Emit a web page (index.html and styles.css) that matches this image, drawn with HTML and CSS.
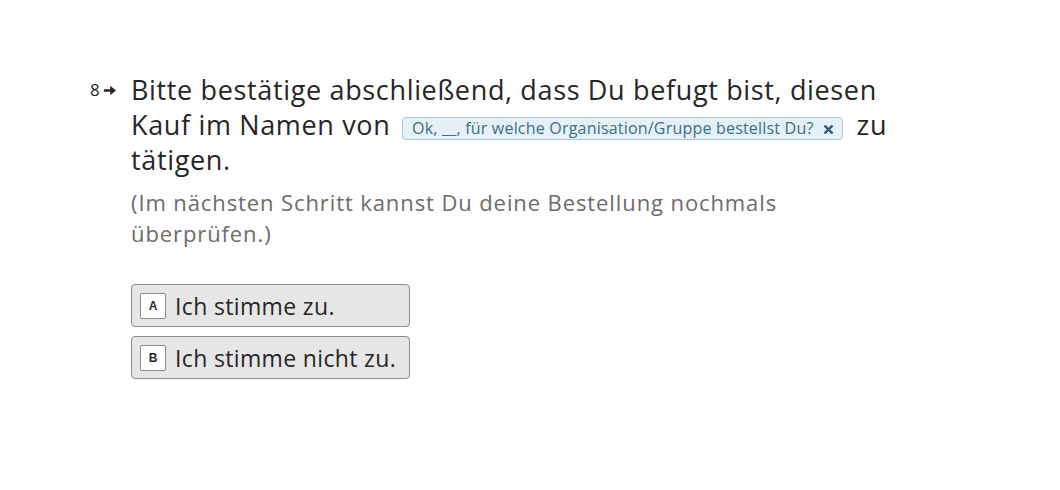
FILE: index.html
```html
<!DOCTYPE html>
<html lang="de">
<head>
<meta charset="utf-8">
<link rel="stylesheet" href="styles.css">
</head>
<body>
<main class="page">
  <section class="question">
    <div class="q-num">8<svg class="q-arrow" width="12" height="11" viewBox="0 0 12 11"><path d="M0 4.2H6.2V0.8L12 5.5L6.2 10.2V6.8H0Z" fill="#262627"/></svg></div>
    <div class="q-body">
      <h1 class="q-title">Bitte bestätige abschließend, dass Du befugt bist, diesen Kauf im Namen von <span class="tag">Ok, __, für welche Organisation/Gruppe bestellst Du? <svg class="tag-x" width="9" height="9" viewBox="0 0 9 9"><path d="M1.3 1.3L7.7 7.7M7.7 1.3L1.3 7.7" stroke="#2f5d75" stroke-width="2.4" stroke-linecap="square"/></svg></span> zu tätigen.</h1>
      <p class="q-desc">(Im nächsten Schritt kannst Du deine Bestellung nochmals überprüfen.)</p>
      <div class="choices">
        <div class="choice"><span class="key">A</span><span class="choice-text">Ich stimme zu.</span></div>
        <div class="choice"><span class="key">B</span><span class="choice-text">Ich stimme nicht zu.</span></div>
      </div>
    </div>
  </section>
</main>
</body>
</html>
```
FILE: styles.css
```css
html, body { margin: 0; padding: 0; background: #fff; }
body { font-family: "Open Sans", "Liberation Sans", sans-serif; color: #262627; }
.page { padding: 72px 0 0 90px; }
.question { display: flex; align-items: flex-start; }
.q-num { width: 41px; flex: none; display: flex; align-items: center; gap: 4px; font-size: 17px; line-height: 20px; padding-top: 8px; font-weight: 400; }
.q-arrow { display: block; }
.q-body { width: 780px; }
.q-title { margin: 0; font-weight: 400; font-size: 27px; line-height: 35px; letter-spacing: 0.65px; }
.tag { display: inline-block; font-size: 16px; line-height: 21px; letter-spacing: 0.2px; color: #3b6f8a; background: #e6f1f7; border: 1px solid #a6cbdc; border-radius: 4px; padding: 0 9px; vertical-align: 1px; margin: 0 6px 0 4px; }
.tag-x { display: inline-block; margin-left: 6px; vertical-align: 0; }
.q-desc { margin: 10px 0 0; font-size: 22px; line-height: 31px; letter-spacing: 0.9px; color: #6c6c6c; max-width: 700px; }
.choices { margin-top: 35px; display: flex; flex-direction: column; gap: 9px; }
.choice { box-sizing: border-box; width: 279px; height: 43px; border: 1px solid #8c8c8c; border-radius: 4px; background: #e6e6e6; display: flex; align-items: center; padding: 0 0 0 8px; }
.key { box-sizing: border-box; width: 26px; height: 26px; border: 1px solid #8c8c8c; border-radius: 2px; background: #fff; display: flex; align-items: center; justify-content: center; font-family: "Liberation Sans", sans-serif; font-weight: 700; font-size: 12px; color: #262627; }
.choice-text { margin-left: 9px; font-size: 23px; letter-spacing: 0.35px; }
```
